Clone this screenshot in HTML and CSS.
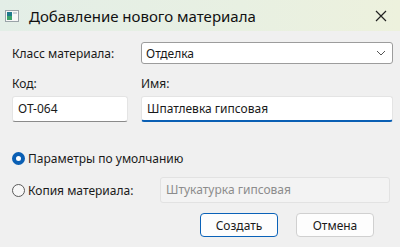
FILE: index.html
```html
<!DOCTYPE html>
<html lang="ru">
<head>
    <meta charset="UTF-8">
    <title>Добавление нового материала</title>
    <link rel="stylesheet" href="styles.css">
</head>
<body>
    <div class="window">
        <div class="titlebar">
            <svg class="app-icon" width="14" height="12" viewBox="0 0 14 12">
                <rect x="0.5" y="0.5" width="13" height="11" fill="#f7f7f7" stroke="#9aa3a8"/>
                <rect x="2" y="2" width="5" height="8" fill="#1f7a8c"/>
                <rect x="2" y="6" width="5" height="4" fill="#3aa36b"/>
                <rect x="8" y="2" width="4" height="2" fill="#c9d3d8"/>
            </svg>
            <span class="title">Добавление нового материала</span>
            <span class="close">
                <svg width="12" height="12" viewBox="0 0 12 12">
                    <path d="M1 1 L11 11 M11 1 L1 11" stroke="#222" stroke-width="1.2" fill="none"/>
                </svg>
            </span>
        </div>

        <div class="content">
            <div class="row-class">
                <label class="lbl">Класс материала:</label>
                <div class="select">
                    <span>Отделка</span>
                    <svg width="10" height="6" viewBox="0 0 10 6">
                        <path d="M1 1 L5 5 L9 1" stroke="#555" stroke-width="1" fill="none"/>
                    </svg>
                </div>
            </div>

            <div class="row-fields">
                <div class="field code">
                    <label class="lbl">Код:</label>
                    <div class="input">ОТ-064</div>
                </div>
                <div class="field name">
                    <label class="lbl">Имя:</label>
                    <div class="input focused">Шпатлевка гипсовая</div>
                </div>
            </div>

            <div class="radio-row first">
                <span class="radio checked"></span>
                <span class="radio-text">Параметры по умолчанию</span>
            </div>
            <div class="radio-row second">
                <span class="radio"></span>
                <span class="radio-text copy">Копия материала:</span>
                <div class="input disabled">Штукатурка гипсовая</div>
            </div>

            <div class="buttons">
                <button class="btn default">Создать</button>
                <button class="btn">Отмена</button>
            </div>
        </div>
    </div>
</body>
</html>
```

FILE: styles.css
```css
body {
    margin: 0;
    font-family: "Noto Sans", "Liberation Sans", sans-serif;
    font-size: 12px;
    color: #1a1a1a;
    background-color: #f0f0f0;
}

.window {
    width: 400px;
    height: 247px;
    overflow: hidden;
}

.titlebar {
    height: 31px;
    display: flex;
    align-items: center;
    padding-left: 5px;
    background: linear-gradient(to right, #e3eee7, #e8f0e2 60%, #edf1dd);
}

.app-icon {
    margin-right: 10px;
}

.title {
    font-size: 15px;
    color: #111;
    flex: 1;
}

.close {
    width: 36px;
    display: flex;
    justify-content: center;
    margin-right: 1px;
}

.content {
    padding: 11px 7px 0 12px;
}

.lbl {
    display: block;
}

.row-class {
    display: flex;
    align-items: center;
}

.row-class .lbl {
    width: 129px;
}

.select {
    flex: 1;
    height: 20px;
    display: flex;
    align-items: center;
    justify-content: space-between;
    padding: 0 6px 0 4px;
    background-color: #fff;
    border: 1px solid #9c9c9c;
    border-radius: 3px;
}

.row-fields {
    display: flex;
    gap: 13px;
    margin-top: 11px;
}

.field .lbl {
    margin-bottom: 4px;
}

.code {
    width: 116px;
}

.name {
    flex: 1;
}

.input {
    height: 24px;
    line-height: 24px;
    padding: 0 5px;
    background-color: #fff;
    border: 1px solid #e4e4e4;
    border-bottom-color: #8a8a8a;
    border-radius: 3px;
    white-space: nowrap;
}

.input.focused {
    height: 23px;
    border-bottom: 2px solid #0a5fb4;
}

.input.disabled {
    flex: 1;
    margin-left: 16px;
    margin-right: 3px;
    color: #8c8c8c;
    background-color: #f3f3f3;
    border-color: #e2e2e2;
}

.radio-row {
    display: flex;
    align-items: center;
}

.radio-row.first {
    margin-top: 28px;
}

.radio-row.second {
    margin-top: 10px;
}

.radio {
    width: 13px;
    height: 13px;
    box-sizing: border-box;
    border-radius: 50%;
    border: 1px solid #5a5a5a;
    background-color: #f7f7f7;
    margin-right: 3px;
}

.radio.checked {
    border: 4px solid #0a5fb4;
    background-color: #fff;
}

.radio-text.copy {
    width: 116px;
}

.buttons {
    display: flex;
    justify-content: flex-end;
    gap: 18px;
    margin-top: 10px;
    margin-right: 19px;
}

.btn {
    width: 78px;
    height: 24px;
    font-family: "Noto Sans", "Liberation Sans", sans-serif;
    font-size: 12px;
    color: #1a1a1a;
    background-color: #fdfdfd;
    border: 1px solid #d0d0d0;
    border-radius: 4px;
    padding: 0;
}

.btn.default {
    border: 1.5px solid #0a62b8;
}
```
